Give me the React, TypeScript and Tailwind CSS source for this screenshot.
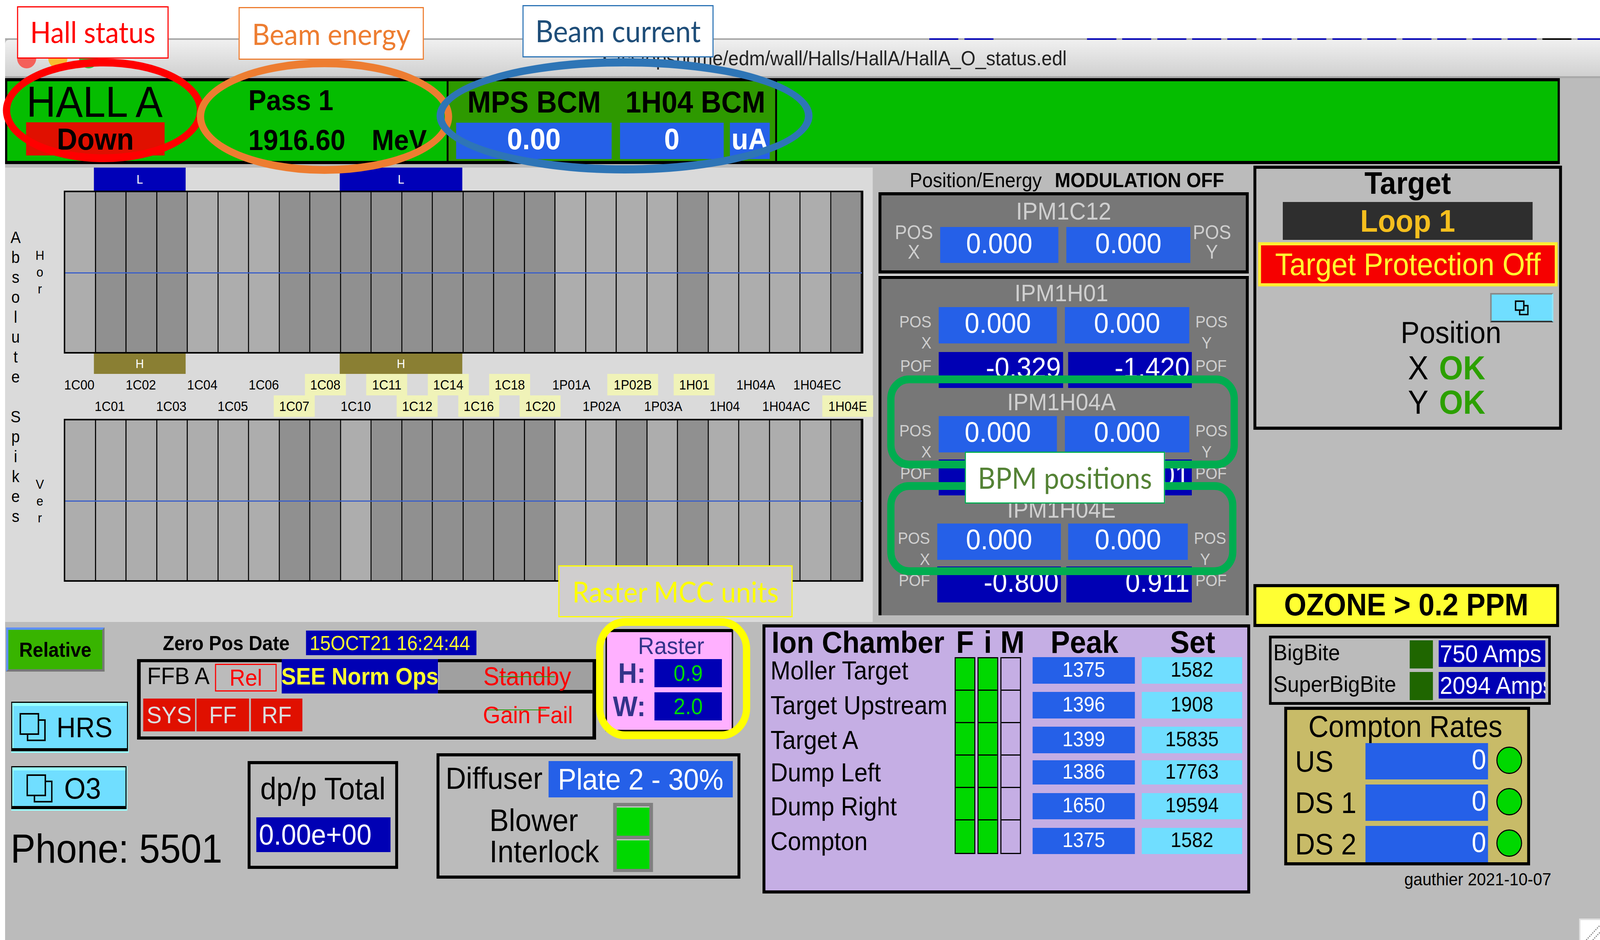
import React from 'react';

type P = { className?: string; children?: React.ReactNode };

const topBars = [0, 1, 1, 1, 0, 0, 0, 1, 1, 1, 1, 1, 1, 1, 1, 1, 0, 0, 0, 0, 1, 0, 0, 0, 0, 1];
const botBars = [0, 0, 0, 0, 0, 0, 0, 1, 1, 0, 1, 1, 1, 1, 1, 1, 0, 0, 1, 0, 1, 0, 0, 0, 0, 1];

const row1 = [
	{ t: '1C00' }, { t: '1C02' }, { t: '1C04' }, { t: '1C06' },
	{ t: '1C08', hl: 'w-[113px]' }, { t: '1C11', hl: 'w-[113px]' }, { t: '1C14', hl: 'w-[113px]' }, { t: '1C18', hl: 'w-[113px]' },
	{ t: '1P01A' }, { t: '1P02B', hl: 'w-[140px]' }, { t: '1H01', hl: 'w-[113px]' }, { t: '1H04A' }, { t: '1H04EC' },
];
const row2 = [
	{ t: '1C01' }, { t: '1C03' }, { t: '1C05' }, { t: '1C07', hl: 'w-[113px]' }, { t: '1C10' },
	{ t: '1C12', hl: 'w-[113px]' }, { t: '1C16', hl: 'w-[113px]' }, { t: '1C20', hl: 'w-[113px]' },
	{ t: '1P02A' }, { t: '1P03A' }, { t: '1H04' }, { t: '1H04AC' }, { t: '1H04E', hl: 'w-[140px]' },
];

const ionRows = [
	{ name: 'Moller Target', peak: '1375', set: '1582', cls: 'h-[68px] mb-[21px]' },
	{ name: 'Target Upstream', peak: '1396', set: '1908', cls: 'h-[68px] mb-[21px]' },
	{ name: 'Target A', peak: '1399', set: '15835', cls: 'h-[68px] mb-[18px]' },
	{ name: 'Dump Left', peak: '1386', set: '17763', cls: 'h-[62px] mb-[22px]' },
	{ name: 'Dump Right', peak: '1650', set: '19594', cls: 'h-[67px] mb-[22px]' },
	{ name: 'Compton', peak: '1375', set: '1582', cls: 'h-[67px]' },
];

const bpmBlocks = [
	{ title: 'IPM1H01', lbl: 'w-[158px]', a: 'w-[326px]', b: 'ml-[22px] w-[343px]', c: 'w-[343px]', d: 'ml-[14px] w-[341px]', v1: '-0.329', v2: '-1.420', gap: 'mt-[22px]' },
	{ title: 'IPM1H04A', lbl: 'w-[158px]', a: 'w-[326px]', b: 'ml-[22px] w-[343px]', c: 'w-[343px]', d: 'ml-[14px] w-[341px]', v1: '-0.214', v2: '0.301', gap: 'mt-[18px]' },
	{ title: 'IPM1H04E', lbl: 'w-[154px]', a: 'w-[341px]', b: 'ml-[20px] w-[330px]', c: 'w-[341px]', d: 'ml-[15px] w-[346px]', v1: '-0.800', v2: '0.911', gap: 'mt-[17px]' },
];

const dashes = Array.from({ length: 13 }, (_, i) => i);

const PagesIcon = ({ className }: P) => (
	<svg viewBox="0 0 72 72" className={className} fill="none" stroke="black" strokeWidth="4">
		<rect x="2" y="2" width="50" height="52" />
		<path d="M52 18H70V70H22V54" />
	</svg>
);

const PopupButton = ({ className, children }: P) => (
	<div className={`border-b-[4px] border-r-[2px] border-[#99ffff] ${className}`}>
		<div className="h-full border-x-[3px] border-t-[3px] border-b-[8px] border-black">
			<div className="flex h-full items-center border-t-[8px] border-l-[3px] border-[#99ffff] bg-[#70deff]">{children}</div>
		</div>
	</div>
);

const Chart = ({ bars }: { bars: number[] }) => (
	<div className="relative flex h-[417px] w-[2205px] border-[4px] border-black">
		{bars.map((b, i) => (
			<div
				key={i}
				className={`flex-1 border-r-[3px] border-black last:border-r-0 ${b ? 'bg-[#909090]' : 'bg-[#adadad]'}`}
			/>
		))}
		<div className="absolute inset-x-0 top-[205px] h-[3px] bg-[#3a5fc8]" />
	</div>
);

const Markers = ({ bg, text, className }: { bg: string; text: string; className: string }) => (
	<div className={`flex ${className}`}>
		<div className={`ml-[83px] flex w-[253px] items-center justify-center text-[32px] text-white ${bg}`}>{text}</div>
		<div className={`ml-[425px] flex w-[338px] items-center justify-center text-[32px] text-white ${bg}`}>{text}</div>
	</div>
);

const LabelRow = ({ items, className }: { items: { t: string; hl?: string }[]; className: string }) => (
	<div className={`grid h-[55px] grid-cols-[repeat(13,169.6px)] ${className}`}>
		{items.map((l) => (
			<div key={l.t} className="flex items-center justify-center text-[35px]">
				<span className={`flex h-full items-center justify-center ${l.hl ? `bg-[#f0f3b8] ${l.hl}` : ''}`}>{l.t}</span>
			</div>
		))}
	</div>
);

const VText = ({ text, className, rowCls }: { text: string; className: string; rowCls: string }) => (
	<div className={`flex flex-col items-center ${className}`}>
		{text.split('').map((c, i) => (
			<div key={i} className={`flex items-center ${rowCls}`}>
				{c}
			</div>
		))}
	</div>
);

const BpmBlock = ({ b }: { b: (typeof bpmBlocks)[number] }) => (
	<div>
		<div className="flex h-[72px] items-center justify-center pr-[12px] text-[62px] text-[#cfcfcf]">{b.title}</div>
		<div className="flex h-[93px]">
			<div className={`${b.lbl} pt-[11px] pr-[20px] text-right text-[42px] leading-[54px] text-[#cfcfcf]`}>
				POS
				<br />X
			</div>
			<div className={`flex items-center justify-center bg-[#2560e8] pb-[12px] text-[73px] text-white ${b.a}`}>0.000</div>
			<div className={`flex items-center justify-center bg-[#2560e8] pb-[12px] text-[73px] text-white ${b.b}`}>0.000</div>
			<div className="ml-[17px] pt-[11px] text-[42px] leading-[54px] text-[#cfcfcf]">
				POS
				<br />
				<span className="ml-[17px]">Y</span>
			</div>
		</div>
		<div className={`flex h-[92px] ${b.gap}`}>
			<div className={`${b.lbl} pt-[9px] pr-[20px] text-right text-[42px] leading-[54px] text-[#cfcfcf]`}>POF</div>
			<div className={`flex items-center justify-end bg-[#0000b4] pr-[6px] pb-[14px] text-[73px] text-white ${b.c}`}>{b.v1}</div>
			<div className={`flex items-center justify-end bg-[#0000b4] pr-[6px] pb-[14px] text-[73px] text-white ${b.d}`}>{b.v2}</div>
			<div className="ml-[10px] pt-[9px] text-[42px] leading-[54px] text-[#cfcfcf]">POF</div>
		</div>
	</div>
);

const LeftPanel = () => (
	<div className="flex h-[1163px] w-[2393px] shrink-0 bg-[#dadada]">
		<div className="flex w-[162px] shrink-0">
			<VText text="Absolute Spikes" rowCls="h-[51px] min-h-[51px]" className="ml-[4px] mt-[153px] w-[50px] text-[42px]" />
			<div className="ml-[17px] w-[50px]">
				<VText text="Hor" rowCls="h-[43px] min-h-[43px]" className="mt-[202px] text-[34px]" />
				<VText text="Ver" rowCls="h-[43px] min-h-[43px]" className="mt-[457px] text-[34px]" />
			</div>
		</div>
		<div className="flex min-w-0 flex-col">
			<Markers bg="bg-[#0000b8]" text="L" className="h-[59px]" />
			<Chart bars={topBars} />
			<Markers bg="bg-[#8a7f33]" text="H" className="h-[52px]" />
			<LabelRow items={row1} className="-ml-[42px]" />
			<LabelRow items={row2} className="ml-[42px]" />
			<div className="mt-[5px]">
				<Chart bars={botBars} />
			</div>
		</div>
	</div>
);

const BpmColumn = () => (
	<div className="w-[1041px] pl-[16px]">
		<div className="flex h-[63px] items-center pl-[86px] text-[52px]">
			<span>Position/Energy</span>
			<span className="ml-[36px] font-bold">MODULATION OFF</span>
		</div>
		<div className="h-[208px] w-[1021px] border-[8px] border-black bg-[#777777]">
			<div className="flex h-[81px] items-center justify-center text-[63px] text-[#cfcfcf]">IPM1C12</div>
			<div className="flex h-[92px]">
				<div className="ml-[37px] -mt-[11px] w-[105px] text-center text-[50px] leading-[50px] text-[#cfcfcf]">
					POS
					<br />X
				</div>
				<div className="ml-[20px] flex w-[326px] items-center justify-center bg-[#2560e8] pb-[10px] text-[73px] text-white">0.000</div>
				<div className="ml-[22px] flex w-[342px] items-center justify-center bg-[#2560e8] pb-[10px] text-[73px] text-white">0.000</div>
				<div className="ml-[7px] -mt-[11px] w-[105px] text-center text-[50px] leading-[50px] text-[#cfcfcf]">
					POS
					<br />Y
				</div>
			</div>
		</div>
		<div className="mt-[4px] h-[871px] w-[1021px] border-t-[2px] border-white">
			<div className="h-full border-x-[8px] border-t-[8px] border-black bg-[#777777]">
				{bpmBlocks.map((b) => (
					<BpmBlock key={b.title} b={b} />
				))}
			</div>
		</div>
	</div>
);

const BottomRowA = () => (
	<div className="flex h-[336px]">
		<div className="w-[364px]">
			<div className="ml-[3px] mt-[14px] h-[113px] w-[271px] border-[6px] border-t-[#5f8fff] border-l-[#5f8fff] border-b-[#777777] border-r-[#777777] bg-[#38b400]">
				<div className="flex h-full items-center justify-center text-[52px] font-bold">Relative</div>
			</div>
			<PopupButton className="ml-[17px] mt-[77px] h-[131px] w-[324px]">
				<PagesIcon className="ml-[17px] h-[72px] w-[72px]" />
				<span className="ml-[30px] text-[73px]">HRS</span>
			</PopupButton>
		</div>
		<div className="w-[1266px]">
			<div className="mt-[22px] flex h-[63px] items-center">
				<span className="ml-[71px] w-[354px] text-[52px] font-bold">Zero Pos Date</span>
				<span className="ml-[41px] flex h-full w-[470px] items-center pl-[10px] text-[52px] text-[#ffff30] bg-[#0000b4]">15OCT21 16:24:44</span>
			</div>
			<div className="mt-[10px] h-[206px] border-y-[8px] border-x-[10px] border-black">
				<div className="flex h-[80px]">
					<span className="ml-[18px] mt-[5px] w-[187px] text-[62px] leading-[60px]">FFB A</span>
					<span className="mt-[4px] flex h-[71px] w-[170px] items-center justify-center border-[3px] border-[#ff0000] text-[60px] text-[#ff0000]">Rel</span>
					<span className="-mt-[8px] ml-[14px] flex h-[88px] w-[431px] items-center justify-center bg-[#0000b4] text-[61px] font-bold whitespace-nowrap text-[#ffff30]">SEE Norm Ops</span>
					<div className="flex-1 border-b-[9px] border-black">
						<div className="relative ml-[3px] flex h-full items-center bg-[#a0a0a0] pl-[122px] text-[66px] text-[#ff0000]">
							Standby
							<div className="absolute left-[165px] top-[36px] h-[2px] w-[154px] bg-[#1f9a00]" />
						</div>
					</div>
				</div>
				<div className="mt-[13px] flex h-[84px] items-center">
					<span className="ml-[7px] flex h-full w-[143px] items-center justify-center bg-[#e01000] text-[62px] text-[#dddddd]">SYS</span>
					<span className="ml-[4px] flex h-full w-[145px] items-center justify-center bg-[#e01000] text-[62px] text-[#dddddd]">FF</span>
					<span className="ml-[5px] flex h-full w-[142px] items-center justify-center bg-[#e01000] text-[62px] text-[#dddddd]">RF</span>
					<span className="relative ml-[498px] text-[62px] text-[#ff0000]">
						Gain Fail
						<span className="absolute left-[11px] top-[17px] h-[2px] w-[163px] bg-[#1f9a00]" />
					</span>
				</div>
			</div>
		</div>
		<div className="ml-[26px] mt-[18px] h-[262px] w-[352px] border-x-[4px] border-t-[8px] border-b-[4px] border-black bg-[#ffb0ff]">
			<div className="flex h-[69px] items-center justify-center pl-[10px] text-[62px] text-[#33338a]">Raster</div>
			<div className="flex h-[72px] items-center">
				<span className="w-[131px] pr-[24px] text-right text-[72px] font-bold text-[#33338a]">H:</span>
				<span className="flex h-full w-[186px] items-center justify-center bg-[#0000b4] text-[58px] text-[#00d800]">0.9</span>
			</div>
			<div className="mt-[13px] flex h-[72px] items-center">
				<span className="w-[131px] pr-[24px] text-right text-[72px] font-bold text-[#33338a]">W:</span>
				<span className="flex h-full w-[186px] items-center justify-center bg-[#0000b4] text-[58px] text-[#00d800]">2.0</span>
			</div>
		</div>
	</div>
);

const BottomRowB = () => (
	<div className="flex">
		<div className="w-[669px]">
			<PopupButton className="ml-[17px] mt-[33px] h-[114px] w-[320px]">
				<PagesIcon className="ml-[36px] h-[72px] w-[72px]" />
				<span className="ml-[32px] text-[76px]">O3</span>
			</PopupButton>
			<div className="ml-[15px] mt-[37px] flex h-[120px] items-center text-[103px] whitespace-nowrap">Phone: 5501</div>
		</div>
		<div className="mt-[20px] h-[276px] w-[415px] border-[8px] border-black">
			<div className="flex h-[126px] items-center justify-center text-[80px]">dp/p Total</div>
			<div className="ml-[16px] mt-[10px] flex h-[89px] w-[370px] items-center bg-[#0000b4] pl-[7px] text-[74px] text-white">0.00e+00</div>
		</div>
		<div className="ml-[106px] h-[321px] w-[838px] border-[8px] border-black">
			<div className="mt-[12px] flex h-[93px]">
				<span className="ml-[17px] w-[284px] text-[78px] leading-[88px]">Diffuser</span>
				<span className="flex w-[508px] items-center justify-center bg-[#2560e8] text-[76px] whitespace-nowrap text-white">Plate 2 - 30%</span>
			</div>
			<div className="mt-[14px] flex h-[177px]">
				<div className="ml-[138px] w-[341px] pt-[5px] text-[80px] leading-[80px]">
					Blower
					<br />
					Interlock
				</div>
				<div className="flex w-[110px] flex-col gap-[9px] bg-[#808080] px-[10px] pt-[9px]">
					<div className="h-[75px] border-t-[3px] border-[#c8c8c8] bg-[#00d800]" />
					<div className="h-[76px] border-t-[3px] border-[#c8c8c8] bg-[#00d800]" />
				</div>
			</div>
		</div>
	</div>
);

const IonChamber = () => (
	<div className="mt-[6px] h-[689px] w-[1345px] border-[8px] border-black bg-[#c5aee4]">
		<div className="flex h-[76px] items-center text-[80px] font-bold">
			<span className="ml-[17px] w-[505px] text-[78px] whitespace-nowrap">Ion Chamber</span>
			<span className="w-[57px] text-center">F</span>
			<span className="ml-[6px] w-[57px] text-center">i</span>
			<span className="ml-[6px] w-[59px] text-center">M</span>
			<span className="ml-[32px] w-[282px] text-center">Peak</span>
			<span className="ml-[19px] w-[277px] text-center">Set</span>
		</div>
		<div className="flex">
			<div className="w-[522px] pl-[14px]">
				{ionRows.map((r) => (
					<div key={r.name} className={`flex items-center text-[66px] whitespace-nowrap ${r.cls}`}>
						{r.name}
					</div>
				))}
			</div>
			<div className="flex gap-[6px]">
				{[0, 1, 2].map((c) => (
					<div key={c} className="h-[504px] w-[57px] border-x-[3px] border-b-[3px] border-t-[3px] border-black">
						{ionRows.map((r) => (
							<div
								key={r.name}
								className={`h-[83px] border-b-[3px] border-black last:border-b-0 ${c < 2 ? 'bg-[#00d800]' : ''}`}
							/>
						))}
					</div>
				))}
			</div>
			<div className="ml-[32px]">
				{ionRows.map((r) => (
					<div key={r.name} className={`flex text-[53px] ${r.cls}`}>
						<span className="flex w-[282px] items-center justify-center bg-[#2560e8] pb-[6px] text-white">{r.peak}</span>
						<span className="ml-[19px] flex w-[277px] items-center justify-center bg-[#70deff] pb-[6px]">{r.set}</span>
					</div>
				))}
			</div>
		</div>
	</div>
);

const ComptonRow = ({ name }: { name: string }) => (
	<div className="mb-[13px] flex h-[93px]">
		<span className="ml-[22px] w-[194px] pb-[14px] text-[76px] leading-[93px]">{name}</span>
		<span className="flex w-[338px] items-center justify-end bg-[#2560e8] pr-[5px] pb-[10px] text-[72px] text-white">0</span>
		<span className="ml-[23px] mt-[9px] h-[70px] w-[71px] rounded-full border-[3px] border-black bg-[#00d800]" />
	</div>
);

const RightColumn = () => (
	<div className="ml-[9px] mt-[4px] w-[851px]">
		<div className="h-[676px] border-[8px] border-black">
			<div className="flex h-[74px] items-center justify-center text-[80px] font-bold">Target</div>
			<div className="ml-[73px] mt-[11px] flex h-[97px] w-[689px] items-center justify-center bg-[#2e2e2e] text-[80px] font-bold text-[#f5bf1e]">Loop 1</div>
			<div className="ml-[5px] mt-[6px] flex h-[113px] w-[826px] items-center justify-center border-[8px] border-[#ffee33] bg-[#f60000] text-[80px] whitespace-nowrap text-[#ffff30]">
				Target Protection Off
			</div>
			<div className="ml-[645px] mt-[17px] flex h-[75px] w-[174px] items-center justify-center border-[4px] border-t-[#888888] border-l-[#888888] border-r-[#8fe8ff] border-b-[#333333] bg-[#70deff]">
				<svg viewBox="0 0 40 40" className="h-[38px] w-[38px]" fill="none" stroke="black" strokeWidth="4">
					<rect x="2" y="2" width="24" height="24" />
					<path d="M26 14H38V38H14V26" />
				</svg>
			</div>
			<div className="ml-[398px] h-[52px] text-[78px] leading-[52px]">Position</div>
			<div className="ml-[418px] mt-[20px] flex h-[88px] items-center text-[85px]">
				<span className="w-[86px]">X</span>
				<span className="font-bold text-[#2ca000]">OK</span>
			</div>
			<div className="ml-[418px] flex h-[88px] items-center text-[85px]">
				<span className="w-[86px]">Y</span>
				<span className="font-bold text-[#2ca000]">OK</span>
			</div>
		</div>
		<div className="mt-[395px] flex h-[110px] w-[843px] items-center justify-center border-[8px] border-black bg-[#ffff33] pb-[6px] text-[79px] font-bold">
			OZONE &gt; 0.2 PPM
		</div>
		<div className="ml-[43px] mt-[22px] h-[177px] w-[777px] border-[7px] border-black">
			<div className="mt-[5px] flex h-[72px]">
				<span className="w-[381px] pl-[5px] text-[58px] leading-[62px]">BigBite</span>
				<span className="w-[64px] bg-[#1f6600]" />
				<span className="ml-[16px] flex h-[68px] w-[294px] items-center overflow-hidden bg-[#0000b4] pl-[3px] text-[63px] whitespace-nowrap text-white">750 Amps</span>
			</div>
			<div className="mt-[9px] flex h-[72px]">
				<span className="w-[381px] pl-[5px] text-[58px] leading-[62px]">SuperBigBite</span>
				<span className="w-[64px] bg-[#1f6600]" />
				<span className="ml-[16px] flex h-[68px] w-[294px] items-center overflow-hidden bg-[#0000b4] pl-[3px] text-[63px] whitespace-nowrap text-white">2094 Amps</span>
			</div>
		</div>
		<div className="ml-[85px] mt-[5px] h-[406px] w-[678px] border-[8px] border-black bg-[#c8bb68]">
			<div className="flex h-[85px] items-center justify-center pr-[10px] text-[77px] whitespace-nowrap">Compton Rates</div>
			<ComptonRow name="US" />
			<ComptonRow name="DS 1" />
			<ComptonRow name="DS 2" />
		</div>
		<div className="ml-[416px] mt-[10px] flex h-[50px] items-center text-[45px] whitespace-nowrap">gauthier 2021-10-07</div>
	</div>
);

export default function App() {
	return (
		<div className="h-screen w-screen overflow-hidden bg-white">
			<div className="relative h-[2406px] w-[4413px] origin-top-left scale-x-[0.9282] overflow-hidden bg-white font-['Liberation_Sans',sans-serif] leading-none text-black">
				<div className="h-[98px]" />
				{/* edge of the window behind */}
				<div className="ml-[14px] flex h-[4px] bg-[#a8a8a8]">
					<div className="ml-[2549px] w-[81px] bg-[#0000b4]" />
					<div className="ml-[17px] w-[81px] bg-[#0000b4]" />
					<div className="ml-[16px] w-[245px]" />
					{dashes.map((d) => (
						<div key={d} className="mr-[16.5px] w-[81px] bg-[#0000b4]" />
					))}
					<div className="mr-[16.5px] w-[81px] bg-black" />
					<div className="w-[63px] bg-[#0000b4]" />
				</div>

				<div className="ml-[14px] h-[2304px] bg-[#bbbbbb]">
					{/* title bar */}
					<div className="relative flex h-[98px] items-center rounded-tl-[10px] border-b-[5px] border-[#a9a9a9] bg-gradient-to-b from-[#f0f0f0] to-[#d0d0d0]">
						<span className="ml-[33px] h-[53px] w-[53px] rounded-full bg-[#f4605a]" />
						<span className="ml-[33px] h-[53px] w-[53px] rounded-full bg-[#f8bd30]" />
						<span className="ml-[32px] h-[53px] w-[53px] rounded-full bg-[#2bc53f]" />
						<span className="ml-[1211px] flex-1 pr-[1471px] text-right text-[52px] whitespace-nowrap text-[#222222]">X /cs/opshome/edm/wall/Halls/HallA/HallA_O_status.edl</span>
					</div>

					{/* status bar */}
					<div className="flex h-[220px] w-[4288px] border-x-[6px] border-y-[8px] border-black bg-[#05bd00]">
						<div className="w-[1212px] flex">
							<div className="w-[665px]">
								<div className="ml-[53px] flex h-[105px] items-center text-[112px]">HALL A</div>
								<div className="ml-[52px] flex h-[85px] w-[382px] items-center justify-center bg-[#e01000] text-[78px] font-bold">Down</div>
							</div>
							<div className="text-[74px] font-bold">
								<div className="flex h-[98px] items-center">Pass 1</div>
								<div className="flex h-[106px] items-center">
									<span className="w-[340px]">1916.60</span>
									<span>MeV</span>
								</div>
							</div>
						</div>
						<div className="flex w-[911px] flex-col border-x-[5px] border-black bg-[#2e9900]">
							<div className="flex h-[106px] items-center text-[78px] font-bold whitespace-nowrap">
								<span className="ml-[52px] w-[436px]">MPS BCM</span>
								<span>1H04 BCM</span>
							</div>
							<div className="flex h-[93px] text-[76px] font-bold text-white">
								<span className="ml-[21px] flex w-[429px] items-center justify-center bg-[#2560e8] pb-[10px]">0.00</span>
								<span className="ml-[23px] flex w-[286px] items-center justify-center bg-[#2560e8] pb-[10px]">0</span>
								<span className="ml-[17px] flex w-[110px] items-center justify-center bg-[#2560e8] pb-[10px]">uA</span>
							</div>
						</div>
					</div>

					<div className="flex">
						<div>
							<div className="h-[9px]" />
							<div className="flex">
								<LeftPanel />
								<BpmColumn />
							</div>
							<div className="flex">
								<div className="w-[2089px] shrink-0">
									<BottomRowA />
									<BottomRowB />
								</div>
								<IonChamber />
							</div>
						</div>
						<RightColumn />
					</div>
				</div>

				{/* annotations drawn over the screenshot */}
				<div className="absolute left-[8px] top-[150px] h-[265px] w-[555px] rounded-[50%] border-[20px] border-[#ff0000]" />
				<div className="absolute left-[543px] top-[152px] h-[293px] w-[704px] rounded-[50%] border-[20px] border-[#ed7d31]" />
				<div className="absolute left-[1204px] top-[149px] h-[295px] w-[1037px] rounded-[50%] border-[21px] border-[#2e75b6]" />
				<div className="absolute left-[47px] top-[16px] flex h-[134px] w-[418px] items-center justify-center border-[3px] border-[#ff0000] bg-white pb-[4px] font-['Lato',sans-serif] text-[75px] text-[#ff0000]">Hall status</div>
				<div className="absolute left-[658px] top-[18px] flex h-[135px] w-[511px] items-center justify-center border-[3px] border-[#ed7d31] bg-white font-['Lato',sans-serif] text-[76px] text-[#ed7d31]">Beam energy</div>
				<div className="absolute left-[1441px] top-[13px] flex h-[134px] w-[527px] items-center justify-center border-[3px] border-[#2e75b6] bg-white pb-[4px] font-['Lato',sans-serif] text-[77px] text-[#1f4e79]">Beam current</div>

				<div className="absolute left-[2447px] top-[961px] h-[238px] w-[967px] rounded-[60px] border-[20px] border-[#00ad50]" />
				<div className="absolute left-[2447px] top-[1234px] h-[238px] w-[963px] rounded-[60px] border-[20px] border-[#00ad50]" />
				<div className="absolute left-[2661px] top-[1156px] flex h-[133px] w-[552px] items-center justify-center border-[3px] border-[#00ad50] bg-white font-['Lato',sans-serif] text-[75px] text-[#548235]">BPM positions</div>

				<div className="absolute left-[1644px] top-[1582px] h-[310px] w-[425px] rounded-[80px] border-[20px] border-[#ffff00]" />
				<div className="absolute left-[1540px] top-[1447px] flex h-[133px] w-[646px] items-center justify-center border-[3px] border-[#ffff00] bg-[#d0cece] font-['Lato',sans-serif] text-[74px] text-[#ffff00]">Raster MCC units</div>

				<svg viewBox="0 0 58 55" className="absolute left-[4355px] top-[2351px] h-[55px] w-[58px]">
					<rect x="2" y="2" width="58" height="55" fill="white" stroke="#e0e0e0" strokeWidth="4" />
					<path d="M20 55L58 17M38 55L58 35" stroke="#808080" strokeWidth="3" strokeDasharray="3 3" fill="none" />
				</svg>
			</div>
		</div>
	);
}
